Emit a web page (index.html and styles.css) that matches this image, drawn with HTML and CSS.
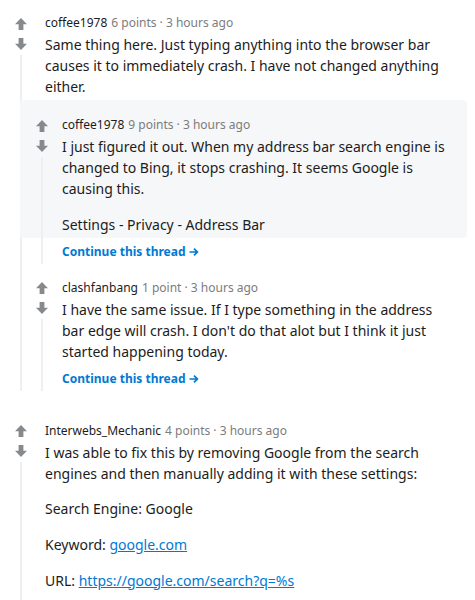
FILE: index.html
```html
<!DOCTYPE html>
<html>
<head>
<meta charset="utf-8">
<link rel="stylesheet" href="styles.css">
</head>
<body>
<div class="page">

  <div class="comment">
    <div class="row">
      <div class="gut">
        <svg class="up" width="12" height="12" viewBox="0 0 12 12"><polygon points="6,0 12,6.2 8.4,6.2 8.4,12 3.6,12 3.6,6.2 0,6.2"/></svg>
        <svg class="down" width="12" height="12" viewBox="0 0 12 12"><polygon points="6,12 12,5.8 8.4,5.8 8.4,0 3.6,0 3.6,5.8 0,5.8"/></svg>
        <div class="line"></div>
      </div>
      <div class="main">
        <div class="head"><span class="user">coffee1978</span><span class="meta">6 points · 3 hours ago</span></div>
        <div class="text">
          <p>Same thing here. Just typing anything into the browser bar causes it to immediately crash. I have not changed anything either.</p>
        </div>
      </div>
    </div>

    <div class="children">
      <div class="nested">
        <div class="nrow hl">
          <div class="gut">
            <svg class="up" width="12" height="12" viewBox="0 0 12 12"><polygon points="6,0 12,6.2 8.4,6.2 8.4,12 3.6,12 3.6,6.2 0,6.2"/></svg>
            <svg class="down" width="12" height="12" viewBox="0 0 12 12"><polygon points="6,12 12,5.8 8.4,5.8 8.4,0 3.6,0 3.6,5.8 0,5.8"/></svg>
            <div class="line"></div>
          </div>
          <div class="main">
            <div class="head"><span class="user">coffee1978</span><span class="meta">9 points · 3 hours ago</span></div>
            <div class="text">
              <p>I just figured it out. When my address bar search engine is changed to Bing, it stops crashing. It seems Google is causing this.</p>
              <p>Settings - Privacy - Address Bar</p>
            </div>
          </div>
        </div>
        <div class="nrow cont">
          <div class="gut"><div class="line"></div></div>
          <div class="main"><a class="continue" href="#">Continue this thread<svg width="10" height="10" viewBox="0 0 10 10"><path d="M0.5 5H8.3M5 1.6L8.4 5L5 8.4" fill="none" stroke="#0079d3" stroke-width="1.7"/></svg></a></div>
        </div>
      </div>

      <div class="nested second">
        <div class="nrow">
          <div class="gut">
            <svg class="up" width="12" height="12" viewBox="0 0 12 12"><polygon points="6,0 12,6.2 8.4,6.2 8.4,12 3.6,12 3.6,6.2 0,6.2"/></svg>
            <svg class="down" width="12" height="12" viewBox="0 0 12 12"><polygon points="6,12 12,5.8 8.4,5.8 8.4,0 3.6,0 3.6,5.8 0,5.8"/></svg>
            <div class="line"></div>
          </div>
          <div class="main">
            <div class="head"><span class="user">clashfanbang</span><span class="meta">1 point · 3 hours ago</span></div>
            <div class="text">
              <p>I have the same issue. If I type something in the address bar edge will crash. I don't do that alot but I think it just started happening today.</p>
            </div>
          </div>
        </div>
        <div class="nrow cont">
          <div class="gut"><div class="line"></div></div>
          <div class="main"><a class="continue" href="#">Continue this thread<svg width="10" height="10" viewBox="0 0 10 10"><path d="M0.5 5H8.3M5 1.6L8.4 5L5 8.4" fill="none" stroke="#0079d3" stroke-width="1.7"/></svg></a></div>
        </div>
      </div>
    </div>
  </div>

  <div class="comment">
    <div class="row">
      <div class="gut">
        <svg class="up" width="12" height="12" viewBox="0 0 12 12"><polygon points="6,0 12,6.2 8.4,6.2 8.4,12 3.6,12 3.6,6.2 0,6.2"/></svg>
        <svg class="down" width="12" height="12" viewBox="0 0 12 12"><polygon points="6,12 12,5.8 8.4,5.8 8.4,0 3.6,0 3.6,5.8 0,5.8"/></svg>
        <div class="line"></div>
      </div>
      <div class="main more">
        <div class="head"><span class="user">Interwebs_Mechanic</span><span class="meta">4 points · 3 hours ago</span></div>
        <div class="text">
          <p>I was able to fix this by removing Google from the search engines and then manually adding it with these settings:</p>
          <p>Search Engine: Google</p>
          <p>Keyword: <a href="#">google.com</a></p>
          <p>URL: <a href="#">https://google.com/search?q=%s</a></p>
        </div>
      </div>
    </div>
  </div>

</div>
</body>
</html>
```

FILE: styles.css
```css
html, body {
  margin: 0;
  padding: 0;
  background: #ffffff;
}

body {
  font-family: "Noto Sans", Arial, sans-serif;
  color: #1c1c1c;
  width: 475px;
  overflow: hidden;
}

.page {
  padding-right: 8px;
}

.comment + .comment {
  margin-top: 17px;
}

.row {
  display: flex;
  padding-top: 14px;
}

.row > .gut {
  width: 24px;
  margin-left: 9px;
}

.row > .main {
  padding-left: 12px;
}

.gut {
  flex: none;
  display: flex;
  flex-direction: column;
  align-items: center;
}

.gut svg {
  display: block;
  fill: #878a8c;
}

.gut .up {
  margin-top: 3.5px;
}

.gut .down {
  margin-top: 8px;
}

.line {
  flex: 1;
  width: 2px;
  background: #edeff1;
  margin-top: 5px;
}

.cont .line {
  margin-top: 0;
}

.main {
  flex: 1;
  min-width: 0;
  padding-right: 16px;
  padding-bottom: 3px;
}

.main.more {
  padding-bottom: 30px;
}

.head {
  font-size: 12px;
  line-height: 16px;
  height: 16px;
  white-space: nowrap;
  padding-top: 1px;
}

.user {
  color: #1c1c1c;
  margin-right: 4px;
}

.meta {
  color: #7c7c7c;
}

.text {
  margin-top: 3px;
  font-size: 14px;
  line-height: 21px;
}

.text p {
  margin: 0;
}

.text p + p {
  margin-top: 14.7px;
}

.text a {
  color: #0079d3;
  text-decoration: underline;
}

.children {
  margin-left: 20px;
  border-left: 2px solid #edeff1;
}

.nested {
  margin-left: -2px;
}

.nrow {
  display: flex;
}

.nrow > .gut {
  width: 24px;
  margin-left: 10px;
}

.nrow > .main {
  padding-left: 8px;
}

.nested > .nrow:first-child {
  padding-top: 16px;
}

.nested.second > .nrow:first-child {
  padding-top: 15px;
}

.hl {
  background: #f5f7f9;
  border-radius: 4px;
}

.nrow.cont > .main {
  padding-top: 6px;
  padding-bottom: 4px;
  line-height: 16px;
  font-size: 12px;
}

.continue {
  display: flex;
  width: max-content;
  align-items: center;
  height: 16px;
  font-size: 12px;
  line-height: 16px;
  font-weight: 700;
  color: #0079d3;
  text-decoration: none;
}

.continue svg {
  margin-left: 3px;
}
```
